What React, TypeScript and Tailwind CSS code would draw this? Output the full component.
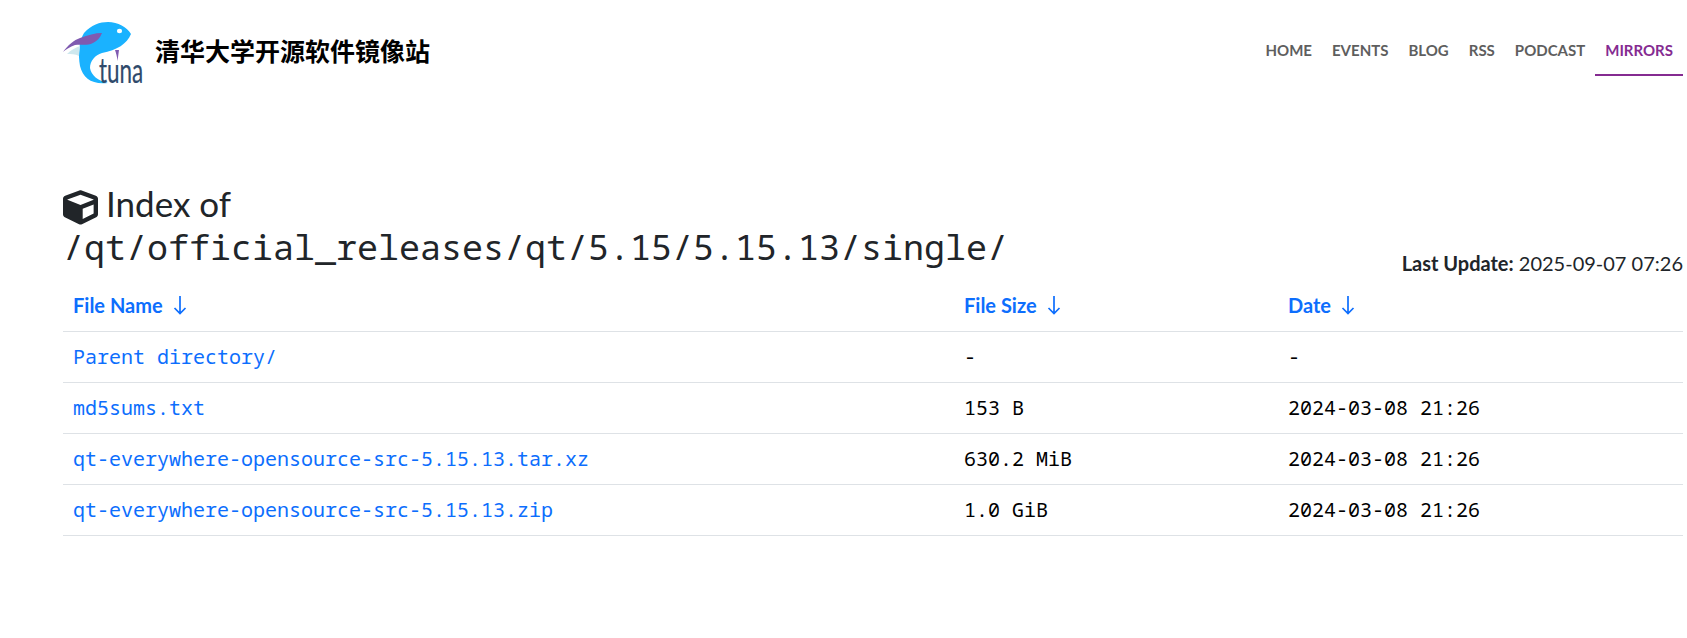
import React from 'react';
import { FaCube } from 'react-icons/fa';

const mono = "font-['Noto_Sans_Mono','DejaVu_Sans_Mono',monospace]";

const rows = [
  { name: 'Parent directory/', size: '-', date: '-' },
  { name: 'md5sums.txt', size: '153 B', date: '2024-03-08 21:26' },
  { name: 'qt-everywhere-opensource-src-5.15.13.tar.xz', size: '630.2 MiB', date: '2024-03-08 21:26' },
  { name: 'qt-everywhere-opensource-src-5.15.13.zip', size: '1.0 GiB', date: '2024-03-08 21:26' },
];

const navItems = ['Home', 'Events', 'Blog', 'RSS', 'Podcast', 'Mirrors'];

const TunaLogo = () => (
  <svg width="110" height="90" viewBox="0 0 110 90" className="shrink-0">
    <path d="M44 33 C51 25 60 22 68 22 C78 22 87 27 91 34 C87 44 77 50 62 53 C55 55 50 61 50 68 C51 75 58 81 68 83 C52 85 43 78 40 66 C38 54 39 41 44 33 Z" fill="#1ab2ff" />
    <path d="M27 54 C31 50 35 48 40 46 L39 56 C35 54 31 54 27 54 Z" fill="#cfe8ee" />
    <path d="M23 52 C28 45 34 40 40 38 C48 35 55 33 62 33 C60 38 57 41 53 43 C47 46 41 44 35 45 C30 47 26 49 23 52 Z" fill="#7f5ab0" />
    <path d="M75 50 L79 50 L77.5 61 C77 56 76 53 75 50 Z" fill="#7f5ab0" />
    <ellipse cx="79.5" cy="31" rx="2.6" ry="2.2" fill="#ffffff" />
    <text transform="translate(59 83) scale(0.66 1)" fontFamily="Lato, sans-serif" fontSize="34" fill="#2f4a6b" stroke="#2f4a6b" strokeWidth="0.2">
      tuna
    </text>
  </svg>
);

const SortArrow = () => (
  <svg width="14" height="20" viewBox="0 0 14 20" fill="none" stroke="currentColor" strokeWidth="1.7" className="shrink-0">
    <path d="M7 1 V18.5 M1.5 13 L7 18.5 L12.5 13" />
  </svg>
);

const SortHeader = ({ label }: { label: string }) => (
  <a className="inline-flex items-center gap-[10px] font-bold text-[#0d6efd]">
    {label}
    <SortArrow />
  </a>
);

export default function App() {
  return (
    <div className="min-h-[638px] bg-white font-['Lato',sans-serif] text-[20px] text-[#212529]">
      {/* Header */}
      <header className="flex items-start justify-between pl-[40px] pr-[4px]">
        <div className="flex items-center gap-[5px]">
          <TunaLogo />
          <span className="mt-[12px] text-[25px] font-bold text-black font-['Noto_Sans_CJK_SC',sans-serif]">
            清华大学开源软件镜像站
          </span>
        </div>
        <nav className="flex pt-[33px]">
          {navItems.map((item) => (
            <a
              key={item}
              className={
                item === 'Mirrors'
                  ? 'h-[43px] border-b-2 border-[#852b91] px-[10px] pt-[6px] text-[15px] font-bold uppercase text-[#852b91]'
                  : 'h-[43px] px-[10px] pt-[6px] text-[15px] font-bold uppercase text-[#5e5e5e]'
              }
            >
              {item}
            </a>
          ))}
        </nav>
      </header>

      {/* Index */}
      <main className="pl-[63px] pr-[4px] pt-[92px]">
        <div className="flex items-end justify-between">
          <h2 className="text-[35px] leading-[42px]">
            <span className="flex items-start gap-[8px]">
              <FaCube className="mt-[8px] h-[35px] w-[35px] shrink-0" />
              <span>Index of</span>
            </span>
            <span className={`mt-[1px] block h-[42px] ${mono}`}>/qt/official_releases/qt/5.15/5.15.13/single/</span>
          </h2>
          <p className="mb-[-7px] text-[20px] leading-[24px]">
            <b>Last Update:</b> 2025-09-07 07:26
          </p>
        </div>

        <table className="mt-[11px] w-full table-fixed border-collapse">
          <thead>
            <tr className="h-[52px] border-b border-[#dee2e6] text-left">
              <th className="w-[891px] px-[10px]"><SortHeader label="File Name" /></th>
              <th className="w-[324px] px-[10px]"><SortHeader label="File Size" /></th>
              <th className="px-[10px]"><SortHeader label="Date" /></th>
            </tr>
          </thead>
          <tbody className={mono}>
            {rows.map((row) => (
              <tr key={row.name} className="h-[51px] border-b border-[#dee2e6]">
                <td className="px-[10px] text-[#0d6efd]">{row.name}</td>
                <td className="px-[10px] text-black">{row.size}</td>
                <td className="px-[10px] text-black">{row.date}</td>
              </tr>
            ))}
          </tbody>
        </table>
      </main>
    </div>
  );
}
